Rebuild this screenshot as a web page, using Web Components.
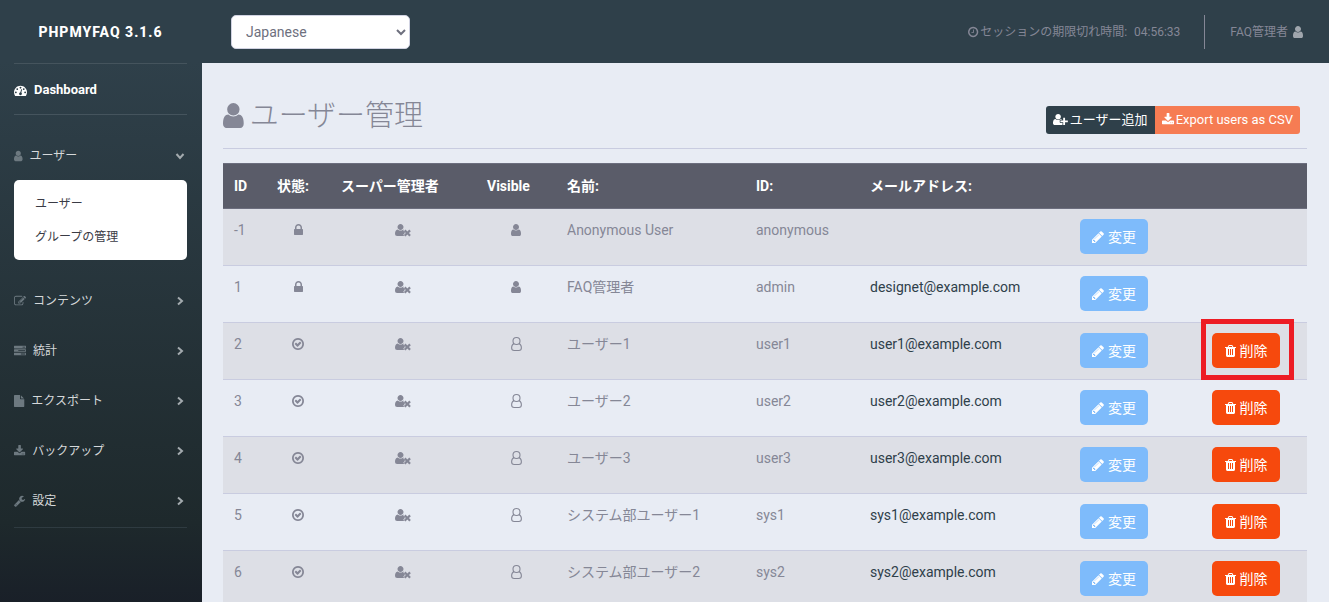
<!DOCTYPE html>
<html lang="ja">
<head>
<meta charset="utf-8">
<title>phpMyFAQ 3.1.6 - ユーザー管理</title>
<style>
  :root {
    --dark: #2f404a;
    --muted: #858796;
    --page: #e8ecf4;
    --line: #c9cce0;
  }
  html { scrollbar-width: none; }
  body {
    margin: 0;
    background: var(--page);
    color: var(--muted);
    font: 14px/22px Roboto, "Noto Sans CJK JP", sans-serif;
  }
</style>
</head>
<body>
<admin-app></admin-app>

<script>
const ICONS = {
  user: ['256 0 1280 1792', 'M1536 1399q0 109-62.5 187t-150.5 78h-854q-88 0-150.5-78t-62.5-187q0-85 8.5-160.5t31.5-152 58.5-131 94-89 134.5-34.5q131 128 313 128t313-128q76 0 134.5 34.5t94 89 58.5 131 31.5 152 8.5 160.5zm-256-887q0 159-112.5 271.5t-271.5 112.5-271.5-112.5-112.5-271.5 112.5-271.5 271.5-112.5 271.5 112.5 112.5 271.5z'],
  lock: ['320 0 1152 1792', 'M640 768h512v-192q0-106-75-181t-181-75-181 75-75 181v192zm832 96v576q0 40-28 68t-68 28h-960q-40 0-68-28t-28-68v-576q0-40 28-68t68-28h32v-192q0-184 132-316t316-132 316 132 132 316v192h32q40 0 68 28t28 68z'],
  check: ['128 0 1536 1792', 'M1299 813l-422 422q-19 19-45 19t-45-19l-294-294q-19-19-19-45t19-45l102-102q19-19 45-19t45 19l147 147 275-275q19-19 45-19t45 19l102 102q19 19 19 45t-19 45zm141 83q0-148-73-273t-198-198-273-73-273 73-198 198-73 273 73 273 198 198 273 73 273-73 198-198 73-273zm224 0q0 209-103 385.5t-279.5 279.5-385.5 103-385.5-103-279.5-279.5-103-385.5 103-385.5 279.5-279.5 385.5-103 385.5 103 279.5 279.5 103 385.5z'],
  clock: ['128 0 1536 1792', 'M1024 544v448q0 14-9 23t-23 9h-320q-14 0-23-9t-9-23v-64q0-14 9-23t23-9h224v-352q0-14 9-23t23-9h64q14 0 23 9t9 23zm416 352q0-148-73-273t-198-198-273-73-273 73-198 198-73 273 73 273 198 198 273 73 273-73 198-198 73-273zm224 0q0 209-103 385.5t-279.5 279.5-385.5 103-385.5-103-279.5-279.5-103-385.5 103-385.5 279.5-279.5 385.5-103 385.5 103 279.5 279.5 103 385.5z'],
  pencil: ['128 0 1536 1792', 'M491 1536l91-91-235-235-91 91v107h128v128h107zm523-928q0-22-22-22-10 0-17 7l-542 542q-7 7-7 17 0 22 22 22 10 0 17-7l542-542q7-7 7-17zm-54-192l416 416-832 832h-416v-416zm683 96q0 53-37 90l-166 166-416-416 166-165q36-38 90-38 53 0 91 38l235 234q37 39 37 91z'],
  trash: ['192 0 1408 1792', 'M704 1376v-704q0-14-9-23t-23-9h-64q-14 0-23 9t-9 23v704q0 14 9 23t23 9h64q14 0 23-9t9-23zm256 0v-704q0-14-9-23t-23-9h-64q-14 0-23 9t-9 23v704q0 14 9 23t23 9h64q14 0 23-9t9-23zm256 0v-704q0-14-9-23t-23-9h-64q-14 0-23 9t-9 23v704q0 14 9 23t23 9h64q14 0 23-9t9-23zm-544-992h448l-48-117q-7-9-17-11h-317q-10 2-17 11zm928 32v64q0 14-9 23t-23 9h-96v948q0 83-47 143.5t-113 60.5h-832q-66 0-113-58.5t-47-141.5v-952h-96q-14 0-23-9t-9-23v-64q0-14 9-23t23-9h309l70-167q15-37 54-63t79-26h320q40 0 79 26t54 63l70 167h309q14 0 23 9t9 23z'],
  download: ['64 0 1664 1792', 'M1344 1344q0-26-19-45t-45-19-45 19-19 45 19 45 45 19 45-19 19-45zm256 0q0-26-19-45t-45-19-45 19-19 45 19 45 45 19 45-19 19-45zm128-224v320q0 40-28 68t-68 28h-1472q-40 0-68-28t-28-68v-320q0-40 28-68t68-28h465l135 136q58 56 136 56t136-56l136-136h464q40 0 68 28t28 68zm-325-569q17 41-14 70l-448 448q-18 19-45 19t-45-19l-448-448q-31-29-14-70 17-39 59-39h256v-448q0-26 19-45t45-19h256q26 0 45 19t19 45v448h256q42 0 59 39z'],
  wrench: ['64 0 1664 1792', 'M448 1472q0-26-19-45t-45-19-45 19-19 45 19 45 45 19 45-19 19-45zm644-420l-682 682q-37 37-90 37-52 0-91-37l-106-108q-38-36-38-90 0-53 38-91l681-681q39 98 114.5 173.5t173.5 114.5zm634-435q0 39-23 106-47 134-164.5 217.5t-258.5 83.5q-185 0-316.5-131.5t-131.5-316.5 131.5-316.5 316.5-131.5q58 0 121.5 16.5t107.5 46.5q16 11 16 28t-16 28l-293 169v224l193 107q5-3 79-48.5t135.5-81 70.5-35.5q15 0 23.5 10t8.5 25z'],
  file: ['128 0 1536 1792', 'M1152 512v-472q22 14 36 28l408 408q14 14 28 36h-472zm-128 32q0 40 28 68t68 28h544v1056q0 40-28 68t-68 28h-1344q-40 0-68-28t-28-68v-1600q0-40 28-68t68-28h800v544z'],
  edit: ['0 0 1792 1792', 'M888 1184l116-116-152-152-116 116v56h96v96h56zm440-720q-16-16-33 1l-350 350q-17 17-1 33t33-1l350-350q17-17 1-33zm80 594v190q0 119-84.5 203.5t-203.5 84.5h-832q-119 0-203.5-84.5t-84.5-203.5v-832q0-119 84.5-203.5t203.5-84.5h832q63 0 117 25 15 7 18 23 3 17-9 29l-49 49q-14 14-32 8-23-6-45-6h-832q-66 0-113 47t-47 113v832q0 66 47 113t113 47h832q66 0 113-47t47-113v-126q0-13 9-22l64-64q15-15 35-7t20 29zm-96-738l288 288-672 672h-288v-288zm444 132l-92 92-288-288 92-92q28-28 68-28t68 28l152 152q28 28 28 68t-28 68z'],
  tasks: ['0 0 1792 1792', 'M1024 1408h640v-128h-640v128zm-384-512h1024v-128h-1024v128zm640-512h384v-128h-384v128zm512 832v256q0 26-19 45t-45 19h-1664q-26 0-45-19t-19-45v-256q0-26 19-45t45-19h1664q26 0 45 19t19 45zm0-512v256q0 26-19 45t-45 19h-1664q-26 0-45-19t-19-45v-256q0-26 19-45t45-19h1664q26 0 45 19t19 45zm0-512v256q0 26-19 45t-45 19h-1664q-26 0-45-19t-19-45v-256q0-26 19-45t45-19h1664q26 0 45 19t19 45z'],
  gauge: ['0 0 1792 1792', 'M384 1152q0-53-37.5-90.5t-90.5-37.5-90.5 37.5-37.5 90.5 37.5 90.5 90.5 37.5 90.5-37.5 37.5-90.5zm192-448q0-53-37.5-90.5t-90.5-37.5-90.5 37.5-37.5 90.5 37.5 90.5 90.5 37.5 90.5-37.5 37.5-90.5zm428 481l101-382q6-26-7.5-48.5t-38.5-29.5-48 6.5-30 39.5l-101 382q-60 5-107 43.5t-63 98.5q-20 77 20 146t117 89 146-20 89-117q16-60-6-117t-72-91zm660-33q0-53-37.5-90.5t-90.5-37.5-90.5 37.5-37.5 90.5 37.5 90.5 90.5 37.5 90.5-37.5 37.5-90.5zm-640-640q0-53-37.5-90.5t-90.5-37.5-90.5 37.5-37.5 90.5 37.5 90.5 90.5 37.5 90.5-37.5 37.5-90.5zm448 192q0-53-37.5-90.5t-90.5-37.5-90.5 37.5-37.5 90.5 37.5 90.5 90.5 37.5 90.5-37.5 37.5-90.5zm320 448q0 261-141 483-19 29-54 29h-1402q-35 0-54-29-141-221-141-483 0-182 71-348t191-286 286-191 348-71 348 71 286 191 191 286 71 348z'],
  userPlus: ['0 0 2048 1792', 'M704 896q-159 0-271.5-112.5t-112.5-271.5 112.5-271.5 271.5-112.5 271.5 112.5 112.5 271.5-112.5 271.5-271.5 112.5zm960 128h352q13 0 22.5 9.5t9.5 22.5v192q0 13-9.5 22.5t-22.5 9.5h-352v352q0 13-9.5 22.5t-22.5 9.5h-192q-13 0-22.5-9.5t-9.5-22.5v-352h-352q-13 0-22.5-9.5t-9.5-22.5v-192q0-13 9.5-22.5t22.5-9.5h352v-352q0-13 9.5-22.5t22.5-9.5h192q13 0 22.5 9.5t9.5 22.5v352zm-736 224q0 52 38 90t90 38h256v238q-68 50-171 50h-874q-121 0-194-69t-73-190q0-53 3.5-103.5t14-109 26.5-108.5 43-97.5 62-81 85.5-53.5 111.5-20q19 0 39 17 79 61 154.5 91.5t164.5 30.5 164.5-30.5 154.5-91.5q20-17 39-17 132 0 217 96h-223q-52 0-90 38t-38 90v192z'],
  userTimes: ['0 0 2048 1792', 'M704 896q-159 0-271.5-112.5t-112.5-271.5 112.5-271.5 271.5-112.5 271.5 112.5 112.5 271.5-112.5 271.5-271.5 112.5zM1130 900L1060 970L1280 1240L1060 1500L1190 1655Q1166 1664 1141 1664H267Q0 1664 0 1405C0 1120 90 832 349 832q19 0 39 17c210 162 422 162 632 0q20-17 39-17 50 0 71 68zM1340 840l244 244 244-244 200 200-244 244 244 244-200 200-244-244-244 244-200-200 244-244-244-244z'],
  userOutline: ['192 0 1408 1792', 'M1344 512A448 448 0 1 1 448 512A448 448 0 1 1 1344 512zM610 850C420 900 272 1100 272 1419Q272 1728 597 1728H1195Q1520 1728 1520 1419C1520 1100 1372 900 1182 850', 'stroke'],
  chevronRight: ['0 0 8 8', 'M2 0.500L6 4L2 7.500', 'stroke'],
  chevronDown: ['0 0 8 8', 'M0.500 2L4 6L7.500 2', 'stroke']
};

/* Registers an element whose open shadow root holds the given markup. */
function define(name, markup, setup) {
  customElements.define(name, class extends HTMLElement {
    constructor() {
      super();
      const template = document.createElement('template');
      template.innerHTML = markup;
      this.attachShadow({ mode: 'open' }).append(template.content.cloneNode(true));
    }
    connectedCallback() { if (setup) setup(this, this.shadowRoot); }
  });
}

define('ui-icon', `
  <style>
    :host { display: inline-block; line-height: 1; vertical-align: -2px; flex: none; }
    svg { display: block; height: 1em; fill: currentColor; overflow: visible; }
    svg.stroke { fill: none; stroke: currentColor; }
  </style>
  <svg aria-hidden="true"><path></path></svg>
`, (host, root) => {
  const [box, d, mode] = ICONS[host.getAttribute('name')];
  const [, , w, h] = box.split(' ');
  const svg = root.querySelector('svg');
  svg.setAttribute('viewBox', box);
  svg.style.aspectRatio = w + ' / ' + h;
  svg.firstElementChild.setAttribute('d', d);
  if (mode) {
    svg.classList.add(mode);
    svg.style.strokeWidth = h > 8 ? 140 : 2;
  }
});

define('nav-item', `
  <style>
    :host { display: block; color: #d5d8da; font-size: 12px; }
    a {
      display: flex; align-items: center; gap: 7px; box-sizing: border-box;
      height: 50px; padding-top: 2px; color: inherit; text-decoration: none;
    }
    .icon { display: flex; color: #6d7980; }
    .label { flex: 1; }
    .arrow { display: flex; justify-content: center; margin-right: 3px; font-size: 8px; color: #a3aaae; }
    :host([active]) { color: #fff; font-size: 13px; font-weight: 700; }
    :host([active]) .icon { color: #fff; }
  </style>
  <a href="#"><span class="icon"></span><span class="label"><slot></slot></span><span class="arrow"></span></a>
`, (host, root) => {
  root.querySelector('.icon').innerHTML = `<ui-icon name="${host.getAttribute('icon')}"></ui-icon>`;
  const arrow = host.getAttribute('arrow');
  if (arrow) root.querySelector('.arrow').innerHTML = `<ui-icon name="${arrow}"></ui-icon>`;
});

define('side-bar', `
  <style>
    :host {
      display: block; box-sizing: border-box; padding: 0 15px 0 14px;
      background: linear-gradient(180deg, #2f404a 10%, #1e292c 86%, #191f28 100%);
    }
    .brand {
      display: block; height: 63px; line-height: 65px; text-align: center; color: #fff;
      font-weight: 800; letter-spacing: 1px; text-decoration: none; text-transform: uppercase;
    }
    hr { margin: 0; border: 0; border-top: 1px solid #45545d; }
    .open { margin-top: 15px; }
    .submenu { margin-bottom: 15px; padding: 8px 0 6px; border-radius: 5px; background: #fff; }
    .submenu a { display: block; padding: 0 21px; font-size: 12px; line-height: 33px; color: #3a3b45; text-decoration: none; }
    .last { margin-top: 2px; border-color: #2f3b41; }
  </style>
  <a class="brand" href="#">phpMyFAQ 3.1.6</a>
  <hr>
  <nav>
    <nav-item active icon="gauge">Dashboard</nav-item>
    <hr>
    <nav-item class="open" icon="user" arrow="chevronDown">ユーザー</nav-item>
    <div class="submenu"><a href="#">ユーザー</a><a href="#">グループの管理</a></div>
    <nav-item icon="edit" arrow="chevronRight">コンテンツ</nav-item>
    <nav-item icon="tasks" arrow="chevronRight">統計</nav-item>
    <nav-item icon="file" arrow="chevronRight">エクスポート</nav-item>
    <nav-item icon="download" arrow="chevronRight">バックアップ</nav-item>
    <nav-item icon="wrench" arrow="chevronRight">設定</nav-item>
  </nav>
  <hr class="last">
`);

define('top-bar', `
  <style>
    :host {
      display: flex; align-items: center; box-sizing: border-box; height: 63px; padding: 0 26px 0 29px;
      background: var(--dark); font-size: 12px;
    }
    select {
      width: 179px; height: 34px; padding: 0 10px; border: 1px solid #d1d3e2; border-radius: 5px;
      background: #fff; color: #6e707e; font: 14px Roboto, sans-serif;
    }
    .session { display: flex; align-items: center; gap: 2px; margin-left: auto; }
    time { margin-left: 5px; }
    .profile {
      display: flex; align-items: center; gap: 5px; height: 34px; margin-left: 24px; padding-left: 25px;
      border-left: 1px solid #858796; color: inherit; text-decoration: none;
    }
    .profile ui-icon { color: #a0a6ad; font-size: 14px; }
  </style>
  <select aria-label="Language"><option>Japanese</option></select>
  <div class="session"><ui-icon name="clock"></ui-icon><span>セッションの期限切れ時間:</span><time>04:56:33</time></div>
  <a class="profile" href="#"><span>FAQ管理者</span><ui-icon name="user"></ui-icon></a>
`);

define('page-heading', `
  <style>
    :host {
      display: flex; align-items: center; justify-content: space-between;
      padding: 28px 7px 0 0; height: 57px; border-bottom: 1px solid var(--line);
    }
    h1 { display: flex; align-items: center; gap: 6px; margin: 0 0 8px; font-size: 29px; line-height: 34px; font-weight: 300; }
  </style>
  <h1><ui-icon name="user"></ui-icon><span><slot></slot></span></h1>
  <slot name="tools"></slot>
`);

define('button-group', `
  <style>
    :host { display: flex; border-radius: 3px; overflow: hidden; }
    button {
      display: flex; align-items: center; gap: 2px; height: 28px; padding: 0 7px; border: 0;
      color: #fff; font: 13px/20px Roboto, "Noto Sans CJK JP", sans-serif; cursor: pointer;
    }
    .add { background: var(--dark); }
    .export { background: #f67c53; }
  </style>
  <button class="add" type="button"><ui-icon name="userPlus"></ui-icon>ユーザー追加</button>
  <button class="export" type="button"><ui-icon name="download"></ui-icon>Export users as CSV</button>
`);

define('action-button', `
  <style>
    :host { display: inline-block; position: relative; vertical-align: top; }
    button {
      display: flex; align-items: center; justify-content: center;
      min-width: 68px; height: 35px; padding: 0 10px; border: 0; border-radius: 5px;
      background: #7ebbfb; color: #fff; font: 14px/22px Roboto, "Noto Sans CJK JP", sans-serif; cursor: pointer;
    }
    ::slotted(ui-icon) { margin-right: 4px; }
    :host([danger]) button { background: #f6490d; }
    :host([marked])::after {
      content: ""; position: absolute; inset: -14px -14px -12px -11px;
      border: 5px solid #ed1c24; pointer-events: none;
    }
  </style>
  <button type="button"><slot></slot></button>
`);

const USERS = [
  ['-1', 'Anonymous User', 'anonymous', '', true],
  ['1', 'FAQ管理者', 'admin', 'designet@example.com', true],
  ['2', 'ユーザー1', 'user1', 'user1@example.com'],
  ['3', 'ユーザー2', 'user2', 'user2@example.com'],
  ['4', 'ユーザー3', 'user3', 'user3@example.com'],
  ['5', 'システム部ユーザー1', 'sys1', 'sys1@example.com'],
  ['6', 'システム部ユーザー2', 'sys2', 'sys2@example.com']
];

define('user-table', `
  <style>
    :host { display: block; }
    table { width: 100%; table-layout: fixed; border-spacing: 0; }
    th, td { text-align: left; white-space: nowrap; vertical-align: top; border-top: 1px solid var(--line); }
    th { padding: 11px; background: #5a5c69; color: #fff; font-weight: 700; border-color: #6c6e7e; }
    td { height: 35px; padding: 10px 11px 11px; }
    tbody tr:first-child td { border-color: #6c6e7e; }
    tbody tr:nth-child(odd) { background: #dddfe6; }
    .mark { text-align: center; }
    a { color: var(--dark); text-decoration: none; }
    .w-id { width: 43px; } .w-status { width: 64px; } .w-super { width: 146px; }
    .w-visible { width: 80px; } .w-name { width: 189px; } .w-login { width: 114px; }
    .w-mail { width: 210px; } .w-edit { width: 132px; } .w-delete { width: 106px; }
  </style>
  <table>
    <colgroup>
      <col class="w-id"><col class="w-status"><col class="w-super"><col class="w-visible"><col class="w-name">
      <col class="w-login"><col class="w-mail"><col class="w-edit"><col class="w-delete">
    </colgroup>
    <thead><tr>
      <th>ID</th><th>状態:</th><th>スーパー管理者</th><th>Visible</th><th>名前:</th>
      <th>ID:</th><th>メールアドレス:</th><th></th><th></th>
    </tr></thead>
    <tbody></tbody>
  </table>
`, (host, root) => {
  root.querySelector('tbody').innerHTML = USERS.map(([id, name, login, mail, locked]) => `
    <tr>
      <td>${id}</td>
      <td class="mark"><ui-icon name="${locked ? 'lock' : 'check'}"></ui-icon></td>
      <td class="mark"><ui-icon name="userTimes"></ui-icon></td>
      <td class="mark"><ui-icon name="${locked ? 'user' : 'userOutline'}"></ui-icon></td>
      <td>${name}</td>
      <td>${login}</td>
      <td>${mail ? `<a href="mailto:${mail}">${mail}</a>` : ''}</td>
      <td><action-button><ui-icon name="pencil"></ui-icon>変更</action-button></td>
      <td>${locked ? '' : `<action-button danger ${id === '2' ? 'marked' : ''}><ui-icon name="trash"></ui-icon>削除</action-button>`}</td>
    </tr>`).join('');
});

define('admin-app', `
  <style>
    :host { display: grid; grid-template-columns: 202px 1fr; min-height: 100vh; }
    main { padding: 0 22px 0 21px; }
    user-table { margin-top: 14px; }
  </style>
  <side-bar></side-bar>
  <div>
    <top-bar></top-bar>
    <main>
      <page-heading>ユーザー管理<button-group slot="tools"></button-group></page-heading>
      <user-table></user-table>
    </main>
  </div>
`);
</script>
</body>
</html>
